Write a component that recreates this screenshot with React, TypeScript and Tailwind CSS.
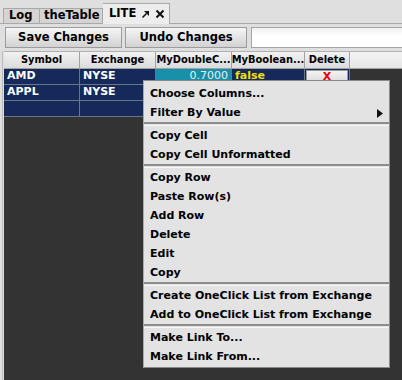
import React from "react";

const cols = [
  { name: "Symbol", w: "w-[76px]" },
  { name: "Exchange", w: "w-[76px]" },
  { name: "MyDoubleC...", w: "w-[76px]" },
  { name: "MyBoolean...", w: "w-[73px]" },
  { name: "Delete", w: "w-[45px]" },
];

const menu: (string | null)[] = [
  "Choose Columns...",
  "Filter By Value",
  null,
  "Copy Cell",
  "Copy Cell Unformatted",
  null,
  "Copy Row",
  "Paste Row(s)",
  "Add Row",
  "Delete",
  "Edit",
  "Copy",
  null,
  "Create OneClick List from Exchange",
  "Add to OneClick List from Exchange",
  null,
  "Make Link To...",
  "Make Link From...",
];

function Cell({ w, className = "", children }: { w: string; className?: string; children?: React.ReactNode }) {
  return (
    <div className={`${w} h-full shrink-0 border-r border-b border-[#6c7488] px-[3px] flex items-center overflow-hidden whitespace-nowrap ${className}`}>
      {children}
    </div>
  );
}

export default function App() {
  return (
    <div className="relative w-[402px] h-[380px] overflow-hidden bg-[#dfdfdf] font-['DejaVu_Sans',sans-serif] font-bold text-[11px] text-black">
      {/* Tabs */}
      <div className="flex h-[24px] items-end pl-[3px] border-b border-[#a9a9a9]">
        <div className="h-[15px] w-[37px] pl-[5px] flex items-center bg-[#d4d4d4] border border-b-0 border-[#a9a9a9] text-[11.5px]">Log</div>
        <div className="h-[15px] w-[63px] pl-[4px] flex items-center bg-[#d4d4d4] border border-b-0 border-l-0 border-[#a9a9a9] text-[11.5px] whitespace-nowrap">theTable</div>
        <div className="h-[21px] w-[67px] pl-[6px] flex items-center gap-[5px] bg-[#ededed] border border-b-0 border-l-0 border-[#a9a9a9] text-[11.5px] -mb-px pb-px">
          <span>LITE</span>
          <svg width="9" height="9" viewBox="0 0 9 9" className="mt-[1px]">
            <path d="M3 1 L8 1 L8 6 Z" fill="#111" />
            <path d="M1.5 7.5 L5.5 3.5" stroke="#111" strokeWidth="1.6" />
          </svg>
          <svg width="10" height="10" viewBox="0 0 10 10">
            <path d="M1.5 1.5 L8.5 8.5 M8.5 1.5 L1.5 8.5" stroke="#111" strokeWidth="2" />
          </svg>
        </div>
      </div>

      {/* Toolbar */}
      <div className="flex items-center h-[27px] pl-[5px] gap-[3px]">
        <button className="h-[21px] w-[117px] border border-[#9c9c9c] bg-gradient-to-b from-[#f6f6f6] to-[#d2d2d2] text-[11.5px] font-bold">Save Changes</button>
        <button className="h-[21px] w-[122px] border border-[#9c9c9c] bg-gradient-to-b from-[#f6f6f6] to-[#d2d2d2] text-[11.5px] font-bold">Undo Changes</button>
        <div className="ml-[1px] h-[21px] flex-1 border border-[#a4a4a4] border-r-0 bg-gradient-to-b from-[#f0f0f0] to-white to-40%"></div>
      </div>

      {/* Table */}
      <div className="ml-[2px] border-l border-[#bcbcbc] pl-[1px] h-full">
        <div className="flex h-[18px] bg-gradient-to-b from-[#f2f2f2] to-[#dadada] border-t border-[#b0b0b0]">
          {cols.map((c) => (
            <div key={c.name} className={`${c.w} shrink-0 h-full border-r border-b border-[#a2a2a2] flex items-center justify-center text-[11px] font-['DejaVu_Sans_Condensed','DejaVu_Sans',sans-serif] whitespace-nowrap overflow-hidden`}>
              {c.name}
            </div>
          ))}
          <div className="flex-1 border-b border-[#a2a2a2] bg-gradient-to-b from-[#f4f4f4] to-[#e6e6e6]"></div>
        </div>
        <div className="bg-[#333333] h-full">
          <div className="flex h-[16px]">
            <Cell w="w-[76px]" className="bg-[#15295a] text-white">AMD</Cell>
            <Cell w="w-[76px]" className="bg-[#15295a] text-white">NYSE</Cell>
            <Cell w="w-[76px]" className="bg-[#1890a9] text-[#e8eef2] justify-end font-normal">0.7000</Cell>
            <Cell w="w-[73px]" className="bg-[#15295a] text-[#f0e000]">false</Cell>
            <Cell w="w-[45px]" className="bg-[#15295a] !px-[1px]">
              <div className="w-full h-[14px] bg-gradient-to-b from-[#f4f4f4] to-[#d8d8d8] border border-[#9a9a9a] flex justify-center text-[#e00000] text-[11px] leading-[12px]">X</div>
            </Cell>
          </div>
          <div className="flex h-[16px]">
            <Cell w="w-[76px]" className="bg-[#15295a] text-white">APPL</Cell>
            <Cell w="w-[76px]" className="bg-[#15295a] text-white">NYSE</Cell>
            <Cell w="w-[76px]" className="bg-[#15295a]"></Cell>
            <Cell w="w-[73px]" className="bg-[#15295a]"></Cell>
            <Cell w="w-[45px]" className="bg-[#15295a]"></Cell>
          </div>
          <div className="flex h-[16px]">
            <Cell w="w-[76px]" className="bg-[#15295a]"></Cell>
            <Cell w="w-[76px]" className="bg-[#15295a]"></Cell>
            <Cell w="w-[76px]" className="bg-[#15295a]"></Cell>
            <Cell w="w-[73px]" className="bg-[#15295a]"></Cell>
            <Cell w="w-[45px]" className="bg-[#15295a]"></Cell>
          </div>
        </div>
      </div>

      {/* Context menu */}
      <div className="absolute left-[143px] top-[80px] w-[247px] bg-[#e3e3e3] border border-[#8a8a8a] border-l-[#a8a8a8] pt-[3px] pb-[1px] text-[11px]">
        {menu.map((m, i) =>
          m === null ? (
            <div key={i} className="h-[4px] border-t-2 border-[#8e8e8e] border-b border-b-[#f6f6f6]"></div>
          ) : (
            <div key={i} className="h-[19px] flex items-center pl-[6px] pr-[6px] pt-[1px] whitespace-nowrap">
              <span className="flex-1">{m}</span>
              {m === "Filter By Value" && (
                <svg width="6" height="9" viewBox="0 0 6 9">
                  <path d="M0 0 L6 4.5 L0 9 Z" fill="#111" />
                </svg>
              )}
            </div>
          )
        )}
      </div>
    </div>
  );
}
